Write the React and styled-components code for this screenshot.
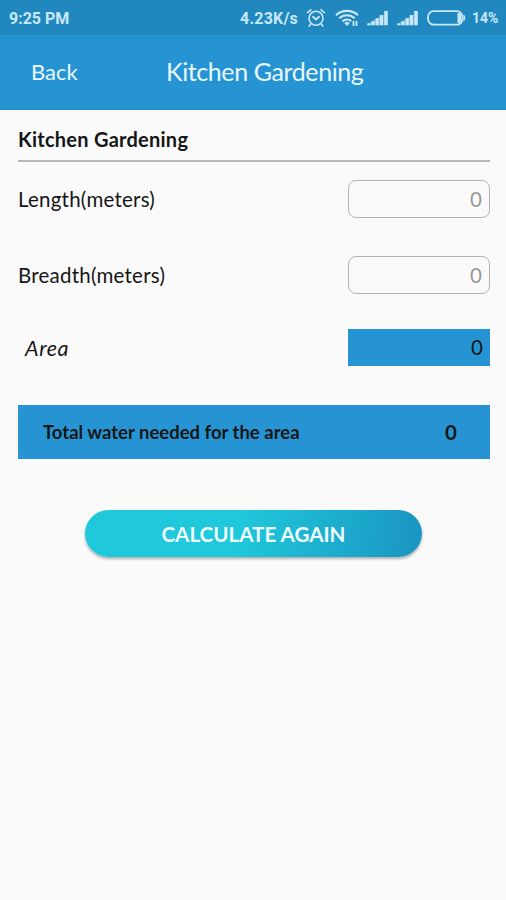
import React, { useState } from "react";
import styled, { createGlobalStyle } from "styled-components";

const colors = {
  blue: "#2694d3",
  darkBlue: "#2188bf",
  status: "#c8e8fa",
  ink: "#161616",
  page: "#fafafa",
};

const SignalIcon = () => (
  <svg width="22" height="16" viewBox="0 0 22 16" fill={colors.status}>
    <path d="M0 15.2V14L17.5 4V15.2Z" fillOpacity="0.35" />
    <rect x="0.3" y="13.4" width="3.2" height="1.8" />
    <rect x="4.4" y="11.2" width="3.2" height="4" />
    <rect x="8.5" y="8.2" width="3.3" height="7" />
    <rect x="12.7" y="5" width="3.4" height="10.2" />
    <rect x="17.2" y="1" width="3.6" height="14.2" />
  </svg>
);

const AlarmIcon = () => (
  <svg
    width="20"
    height="20"
    viewBox="0 0 20 20"
    fill="none"
    stroke={colors.status}
    strokeWidth="1.6"
    strokeLinecap="round"
  >
    <circle cx="10" cy="10.3" r="7" />
    <path d="M1.6 4.6 5 1.8M18.4 4.6 15 1.8M4.6 16.2 3.2 18M15.4 16.2 16.8 18" />
    <path d="M7 8.8 10 11.4 13 8.8" strokeWidth="1.9" />
  </svg>
);

const WifiIcon = () => (
  <svg
    width="24"
    height="18"
    viewBox="0 0 24 18"
    fill="none"
    stroke={colors.status}
    strokeWidth="2.1"
  >
    <path d="M1 6.2C7 0.4 17 0.4 23 6.2" />
    <path d="M4.3 9.3C8.6 5.2 15.4 5.2 19.7 9.3" />
    <path d="M7.5 12.4C10 10 14 10 16.2 12.2" />
    <path d="M9.2 14 12 12.7 14.8 14 12 17Z" fill={colors.status} stroke="none" />
    <path d="M18.5 12v5M21.5 12v5" strokeWidth="1.8" />
  </svg>
);

const BatteryIcon = () => (
  <svg width="39" height="16" viewBox="0 0 39 16" fill="none">
    <rect x="1" y="1.2" width="34.5" height="13.4" rx="5.5" stroke={colors.status} strokeWidth="1.8" />
    <path d="M30.5 3h2q2 1 2 4.9t-2 4.9h-2Z" fill={colors.status} />
    <path d="M36.5 4.5q1.8 1 1.8 3.4t-1.8 3.4Z" fill={colors.status} />
  </svg>
);

const StatusBar = () => (
  <Status>
    <Clock>9:25 PM</Clock>
    <Speed>4.23K/s</Speed>
    <AlarmIcon />
    <Signals>
      <WifiIcon />
      <SignalIcon />
      <SignalIcon />
    </Signals>
    <BatteryIcon />
    <Percent>14%</Percent>
  </Status>
);

const NumberField = ({ label, name, value, handleChange }) => (
  <Row>
    <Label htmlFor={name}>{label}</Label>
    <Input
      id={name}
      name={name}
      inputMode="numeric"
      placeholder="0"
      value={value}
      onChange={handleChange}
    />
  </Row>
);

const App = () => {
  const [size, setSize] = useState({ length: "", breadth: "" });

  const handleChange = (e) => {
    setSize({ ...size, [e.target.name]: e.target.value });
  };

  const area = Number(size.length) * Number(size.breadth) || 0;

  return (
    <Screen>
      <GlobalStyle />
      <StatusBar />
      <Header>
        <Back>Back</Back>
        <Title>Kitchen Gardening</Title>
      </Header>
      <Content>
        <Heading>Kitchen Gardening</Heading>
        <NumberField
          label="Length(meters)"
          name="length"
          value={size.length}
          handleChange={handleChange}
        />
        <NumberField
          label="Breadth(meters)"
          name="breadth"
          value={size.breadth}
          handleChange={handleChange}
        />
        <AreaRow>
          <AreaLabel>Area</AreaLabel>
          <AreaValue>{area}</AreaValue>
        </AreaRow>
        <Total>
          <TotalLabel>Total water needed for the area</TotalLabel>
          <TotalValue>{area}</TotalValue>
        </Total>
        <Button onClick={() => setSize({ length: "", breadth: "" })}>
          CALCULATE AGAIN
        </Button>
      </Content>
    </Screen>
  );
};

export default App;

const GlobalStyle = createGlobalStyle`
  * {
    box-sizing: border-box;
  }
  body {
    margin: 0;
    background: ${colors.page};
  }
`;

const Screen = styled.div`
  width: 506px;
  height: 900px;
  overflow: hidden;
  background: ${colors.page};
  color: ${colors.ink};
  font-family: Lato, sans-serif;
`;

const Status = styled.div`
  display: flex;
  align-items: center;
  height: 35px;
  padding: 0 7px 0 9px;
  background: ${colors.darkBlue};
  color: ${colors.status};
  font-family: Roboto, sans-serif;
  font-weight: 700;
`;

const Clock = styled.span`
  margin-right: auto;
  padding-top: 1px;
  font-size: 16px;
`;

const Speed = styled.span`
  margin-right: 8px;
  padding-top: 1px;
  font-size: 16px;
  letter-spacing: 0.2px;
`;

const Signals = styled.div`
  display: flex;
  align-items: center;
  gap: 8px;
  margin: 0 8px 0 9px;
`;

const Percent = styled.span`
  width: 27px;
  margin-left: 6px;
  padding-top: 1px;
  font-size: 14px;
`;

const Header = styled.div`
  display: flex;
  align-items: center;
  height: 75px;
  padding: 0 0 2px 31px;
  background: ${colors.blue};
  border-bottom: 1px solid #1a8bcd;
  color: #e9f8ff;
`;

const Back = styled.div`
  width: 135px;
  font-size: 22px;
`;

const Title = styled.div`
  font-size: 25px;
  letter-spacing: -0.4px;
`;

const Content = styled.div`
  display: flex;
  flex-direction: column;
  padding: 0 16px 0 18px;
`;

const Heading = styled.div`
  height: 52px;
  margin-bottom: 18px;
  padding-top: 17px;
  border-bottom: 2px solid #b8b8b8;
  font-size: 20px;
  font-weight: 700;
  letter-spacing: 0.25px;
`;

const Row = styled.div`
  display: flex;
  align-items: center;
  justify-content: space-between;
  height: 38px;
  margin-bottom: 38px;
`;

const Label = styled.label`
  font-size: 20.5px;
  letter-spacing: 0.23px;
`;

const Input = styled.input`
  width: 142px;
  height: 38px;
  padding: 0 7px;
  border: 1.5px solid #b4b4b4;
  border-radius: 8px;
  background: transparent;
  font-family: inherit;
  font-size: 20.5px;
  text-align: right;

  &::placeholder {
    color: #999;
  }
`;

const AreaRow = styled.div`
  display: flex;
  align-items: center;
  justify-content: space-between;
  margin: -3px 0 39px;
  padding-left: 7px;
`;

const AreaLabel = styled.span`
  font-size: 21.5px;
  font-style: italic;
  letter-spacing: 0.6px;
`;

const AreaValue = styled.div`
  width: 142px;
  height: 37px;
  padding-right: 7px;
  background: ${colors.blue};
  font-size: 20.5px;
  line-height: 37px;
  text-align: right;
`;

const Total = styled.div`
  display: flex;
  align-items: center;
  justify-content: space-between;
  height: 54px;
  padding: 0 33px 0 25px;
  background: ${colors.blue};
`;

const TotalLabel = styled.span`
  font-size: 18.5px;
  font-weight: 700;
`;

const TotalValue = styled.span`
  font-size: 20.5px;
  font-weight: 700;
`;

const Button = styled.button`
  width: 337px;
  height: 47px;
  margin: 51px 0 0 67px;
  padding: 0;
  border: 0;
  border-radius: 24px;
  background: linear-gradient(100deg, #1fc8db 45%, #1b96c3 98%);
  box-shadow: 0 2px 3px rgba(0, 0, 0, 0.3);
  color: #effdff;
  font-family: inherit;
  font-size: 20.6px;
  font-weight: 700;
  cursor: pointer;
`;
